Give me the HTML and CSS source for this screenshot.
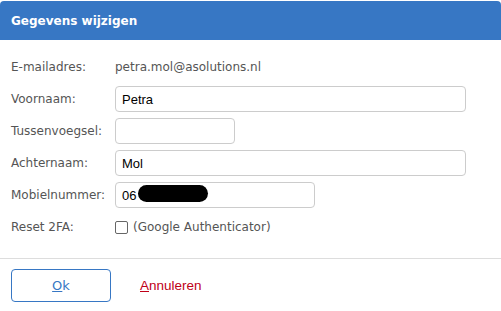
FILE: index.html
```html
<!DOCTYPE html>
<html lang="nl">
<head>
<meta charset="utf-8">
<title>Gegevens wijzigen</title>
<link rel="stylesheet" href="styles.css">
</head>
<body>
<div class="dialog">
  <div class="header"><span class="title">Gegevens wijzigen</span></div>
  <div class="body">
    <div class="row">
      <span class="label">E-mailadres:</span>
      <span class="value">petra.mol@asolutions.nl</span>
    </div>
    <div class="row">
      <span class="label">Voornaam:</span>
      <span class="input wide">Petra</span>
    </div>
    <div class="row">
      <span class="label">Tussenvoegsel:</span>
      <span class="input short"></span>
    </div>
    <div class="row">
      <span class="label">Achternaam:</span>
      <span class="input wide">Mol</span>
    </div>
    <div class="row">
      <span class="label">Mobielnummer:</span>
      <span class="input medium">06<span class="redact"></span></span>
    </div>
    <div class="row">
      <span class="label">Reset 2FA:</span>
      <span class="check"><span class="box"></span>(Google Authenticator)</span>
    </div>
  </div>
  <div class="footer">
    <button class="btn-ok"><u>O</u>k</button>
    <a class="cancel"><u>A</u>nnuleren</a>
  </div>
</div>
</body>
</html>
```
FILE: styles.css
```css
html, body {
  margin: 0;
  padding: 0;
  background: #fff;
}
.dialog {
  width: 501px;
  padding-top: 1px;
  font-family: "DejaVu Sans", Verdana, sans-serif;
  font-size: 12px;
  color: #555;
}
.header {
  height: 39px;
  background: #3777c4;
  border-radius: 4px 4px 0 0;
  display: flex;
  align-items: center;
  padding-left: 11px;
}
.title {
  color: #fff;
  font-weight: bold;
  font-size: 12px;
}
.body {
  padding: 11px 0 0 11px;
}
.row {
  display: flex;
  align-items: center;
  height: 32px;
}
.label {
  width: 104px;
  flex: none;
}
.value {
  color: #555;
}
.input {
  box-sizing: border-box;
  height: 26px;
  border: 1px solid #ccc;
  border-radius: 4px;
  display: flex;
  align-items: center;
  padding-left: 6px;
  font-family: "Liberation Sans", Arial, sans-serif;
  font-size: 13px;
  color: #000;
  position: relative;
}
.wide { width: 351px; }
.short { width: 120px; }
.medium { width: 200px; }
.redact {
  position: absolute;
  left: 22px;
  top: 2px;
  width: 70px;
  height: 17px;
  background: #000;
  border-radius: 9px;
}
.check {
  display: flex;
  align-items: center;
}
.box {
  box-sizing: border-box;
  width: 13px;
  height: 13px;
  border: 1px solid #666;
  border-radius: 2px;
  margin-right: 5px;
}
.footer {
  margin-top: 15px;
  border-top: 1px solid #ddd;
  padding: 10px 11px;
  display: flex;
  align-items: center;
}
.btn-ok {
  box-sizing: border-box;
  width: 100px;
  height: 33px;
  border: 1px solid #3777c4;
  border-radius: 4px;
  background: #fff;
  color: #3777c4;
  font-family: "DejaVu Sans", Verdana, sans-serif;
  font-size: 13px;
  padding: 0;
}
.cancel {
  margin-left: 29px;
  color: #c00018;
  font-family: "Liberation Sans", Arial, sans-serif;
  font-size: 13.5px;
}
.cancel u, .btn-ok u {
  text-decoration: underline;
}
```
